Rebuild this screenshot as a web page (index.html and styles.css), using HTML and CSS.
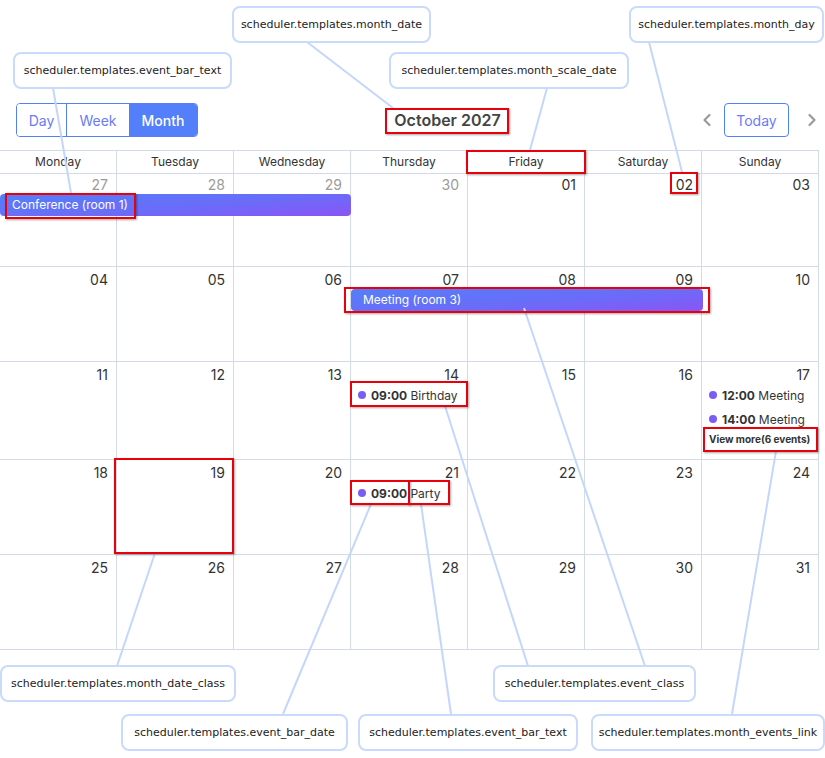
FILE: index.html
```html
<!DOCTYPE html>
<html lang="en">
<head>
<meta charset="utf-8">
<title>Scheduler month templates</title>
<link rel="stylesheet" href="styles.css">
</head>
<body>
<div class="page">
  <div class="scheduler">
    <div class="toolbar">
      <div class="tabs">
        <button class="tab tab-day">Day</button>
        <button class="tab tab-week">Week</button>
        <button class="tab tab-month active">Month</button>
      </div>
      <div class="title">October 2027</div>
      <div class="nav">
        <span class="arrow prev"><svg width="20" height="20" viewBox="0 0 20 20"><path d="M12.5 5 L7.5 10 L12.5 15" fill="none" stroke="#9a9a9a" stroke-width="2.2" stroke-linecap="round" stroke-linejoin="round"/></svg></span>
        <button class="today">Today</button>
        <span class="arrow next"><svg width="20" height="20" viewBox="0 0 20 20"><path d="M7.5 5 L12.5 10 L7.5 15" fill="none" stroke="#9a9a9a" stroke-width="2.2" stroke-linecap="round" stroke-linejoin="round"/></svg></span>
      </div>
    </div>

    <div class="month">
      <div class="scale">
        <div class="scale-cell">Monday</div>
        <div class="scale-cell">Tuesday</div>
        <div class="scale-cell">Wednesday</div>
        <div class="scale-cell">Thursday</div>
        <div class="scale-cell">Friday</div>
        <div class="scale-cell">Saturday</div>
        <div class="scale-cell">Sunday</div>
      </div>

      <div class="week first">
        <div class="cell c1 past">27</div>
        <div class="cell c2 past">28</div>
        <div class="cell c3 past">29</div>
        <div class="cell c4 past">30</div>
        <div class="cell c5">01</div>
        <div class="cell c6">02</div>
        <div class="cell c7">03</div>
        <div class="bar span-1-3 flush-left">Conference (room 1)</div>
      </div>

      <div class="week">
        <div class="cell c1">04</div>
        <div class="cell c2">05</div>
        <div class="cell c3">06</div>
        <div class="cell c4">07</div>
        <div class="cell c5">08</div>
        <div class="cell c6">09</div>
        <div class="cell c7">10</div>
        <div class="bar span-4-6">Meeting (room 3)</div>
      </div>

      <div class="week tall">
        <div class="cell c1">11</div>
        <div class="cell c2">12</div>
        <div class="cell c3">13</div>
        <div class="cell c4">14</div>
        <div class="cell c5">15</div>
        <div class="cell c6">16</div>
        <div class="cell c7">17</div>
        <div class="ev c4 r2"><span class="dot"></span><b>09:00</b>&nbsp;Birthday</div>
        <div class="ev c7 r2"><span class="dot"></span><b>12:00</b>&nbsp;Meeting</div>
        <div class="ev c7 r3"><span class="dot"></span><b>14:00</b>&nbsp;Meeting</div>
        <div class="more c7 r4">View more(6 events)</div>
      </div>

      <div class="week">
        <div class="cell c1">18</div>
        <div class="cell c2">19</div>
        <div class="cell c3">20</div>
        <div class="cell c4">21</div>
        <div class="cell c5">22</div>
        <div class="cell c6">23</div>
        <div class="cell c7">24</div>
        <div class="ev c4 r2"><span class="dot"></span><b>09:00</b>&nbsp;Party</div>
      </div>

      <div class="week">
        <div class="cell c1">25</div>
        <div class="cell c2">26</div>
        <div class="cell c3">27</div>
        <div class="cell c4">28</div>
        <div class="cell c5">29</div>
        <div class="cell c6">30</div>
        <div class="cell c7">31</div>
      </div>
    </div>
  </div>

  <svg class="connectors" width="825" height="758" viewBox="0 0 825 758">
    <g stroke="#c4d7fb" stroke-width="2" fill="none">
      <line x1="307" y1="42" x2="393" y2="108"/>
      <line x1="53" y1="88" x2="71" y2="193"/>
      <line x1="547" y1="88" x2="530" y2="150"/>
      <line x1="649" y1="42" x2="682" y2="172"/>
      <line x1="155" y1="553" x2="117" y2="666"/>
      <line x1="371" y1="504" x2="283" y2="714"/>
      <line x1="421" y1="504" x2="451" y2="714"/>
      <line x1="445" y1="406" x2="528" y2="666"/>
      <line x1="524" y1="308" x2="645" y2="666"/>
      <line x1="776" y1="451" x2="732" y2="714"/>
    </g>
  </svg>

  <div class="mark mk-conf"></div>
  <div class="mark mk-title"></div>
  <div class="mark mk-friday"></div>
  <div class="mark mk-day02"></div>
  <div class="mark mk-meeting"></div>
  <div class="mark mk-birthday"></div>
  <div class="mark mk-more"></div>
  <div class="mark mk-cell19"></div>
  <div class="mark mk-time"></div>
  <div class="mark mk-party"></div>

  <div class="callout co-month-date">scheduler.templates.month_date</div>
  <div class="callout co-month-day">scheduler.templates.month_day</div>
  <div class="callout co-bar-text-top">scheduler.templates.event_bar_text</div>
  <div class="callout co-scale-date">scheduler.templates.month_scale_date</div>
  <div class="callout co-date-class">scheduler.templates.month_date_class</div>
  <div class="callout co-event-class">scheduler.templates.event_class</div>
  <div class="callout co-bar-date">scheduler.templates.event_bar_date</div>
  <div class="callout co-bar-text-bottom">scheduler.templates.event_bar_text</div>
  <div class="callout co-events-link">scheduler.templates.month_events_link</div>
</div>
</body>
</html>
```

FILE: styles.css
```css
* { box-sizing: border-box; }

html, body {
  margin: 0;
  padding: 0;
  background: #ffffff;
}

body {
  font-family: Inter, "Noto Sans", sans-serif;
  color: #333333;
  width: 825px;
  height: 758px;
  overflow: hidden;
}

.page {
  position: relative;
  width: 825px;
  height: 758px;
}

.scheduler {
  padding-top: 103px;
}

/* ---------- toolbar ---------- */
.toolbar {
  display: flex;
  align-items: center;
  justify-content: space-between;
  height: 34px;
  padding: 0 3px 0 16px;
}

.tabs {
  display: flex;
  height: 34px;
  border: 1px solid #537ffa;
  border-radius: 4px;
  overflow: hidden;
}

.tab {
  font-family: Inter, "Noto Sans", sans-serif;
  font-size: 14px;
  color: #6a7cf6;
  background: #ffffff;
  border: 0;
  margin: 0;
  padding: 0;
  height: 32px;
  cursor: pointer;
}

.tab-day { width: 50px; border-right: 1px solid #537ffa; }
.tab-week { width: 62px; }
.tab-month { width: 68px; }

.tab.active {
  background: #537ffa;
  color: #ffffff;
  font-weight: 500;
}

.title {
  font-size: 16px;
  font-weight: 600;
  color: #444444;
}

.nav {
  display: flex;
  align-items: center;
  height: 34px;
}

.arrow {
  display: flex;
  width: 20px;
  height: 20px;
}

.prev { margin-right: 7px; }
.next { margin-left: 13px; }

.today {
  font-family: Inter, "Noto Sans", sans-serif;
  font-size: 14px;
  color: #6a7cf6;
  background: #ffffff;
  width: 65px;
  height: 34px;
  border: 1px solid #537ffa;
  border-radius: 4px;
  padding: 0;
}

/* ---------- month grid ---------- */
.month {
  margin-top: 13px;
  width: 819px;
  border-top: 1px solid #d3dbe6;
}

.scale {
  display: grid;
  grid-template-columns: repeat(7, 117px);
  height: 23px;
  border-bottom: 1px solid #d3dbe6;
}

.scale-cell {
  font-size: 12px;
  line-height: 22px;
  text-align: center;
  color: #333333;
  border-right: 1px solid #d3dbe6;
}

.week {
  display: grid;
  grid-template-columns: repeat(7, 117px);
  grid-template-rows: 21px 24px 24px 1fr;
  height: 95px;
  border-bottom: 1px solid #d3dbe6;
}

.week.first {
  height: 93px;
  grid-template-rows: 19px 24px 24px 1fr;
}

.week.tall {
  height: 98px;
}

.cell {
  grid-row: 1 / -1;
  border-right: 1px solid #d3dbe6;
  text-align: right;
  font-size: 14px;
  line-height: 17px;
  padding: 4px 8px 0 0;
  color: #333333;
}

.week.first .cell { padding-top: 2px; }

.cell.past { color: #9b9b9b; }

.c1 { grid-column: 1; }
.c2 { grid-column: 2; }
.c3 { grid-column: 3; }
.c4 { grid-column: 4; }
.c5 { grid-column: 5; }
.c6 { grid-column: 6; }
.c7 { grid-column: 7; }

.r2 { grid-row: 2; }
.r3 { grid-row: 3; }
.r4 { grid-row: 4; }

.bar {
  grid-row: 2;
  align-self: start;
  margin-top: 1px;
  height: 22px;
  line-height: 22px;
  font-size: 12px;
  color: #ffffff;
  padding-left: 12px;
  border-radius: 4px;
  background: linear-gradient(175deg, #537ffa 0%, #6a6cf8 55%, #8a55f6 100%);
  white-space: nowrap;
  overflow: hidden;
}

.span-1-3 { grid-column: 1 / 4; }
.span-4-6 { grid-column: 4 / 7; margin-right: -1px; }

.ev {
  display: flex;
  align-items: center;
  height: 24px;
  padding-left: 7px;
  font-size: 12px;
  color: #333333;
  white-space: nowrap;
}

.ev b { font-weight: 700; }

.dot {
  width: 8px;
  height: 8px;
  border-radius: 50%;
  background: #7a5df6;
  margin-right: 5px;
  flex: none;
}

.more {
  align-self: start;
  height: 16px;
  line-height: 16px;
  padding-left: 7px;
  font-size: 10px;
  font-weight: 700;
  color: #333333;
  white-space: nowrap;
}

/* ---------- annotation overlay ---------- */
.connectors {
  position: absolute;
  left: 0;
  top: 0;
  pointer-events: none;
}

.mark {
  position: absolute;
  border: 2px solid #e8000b;
  box-shadow: 1px 1px 2px rgba(0, 0, 0, 0.35);
}

.mk-conf { left: 5px; top: 193px; width: 131px; height: 26px; }
.mk-title { left: 385px; top: 108px; width: 124px; height: 26px; }
.mk-friday { left: 466px; top: 150px; width: 120px; height: 24px; }
.mk-day02 { left: 670px; top: 172px; width: 28px; height: 22px; }
.mk-meeting { left: 344px; top: 287px; width: 366px; height: 26px; }
.mk-birthday { left: 350px; top: 381px; width: 118px; height: 26px; }
.mk-more { left: 703px; top: 427px; width: 115px; height: 25px; }
.mk-cell19 { left: 114px; top: 458px; width: 120px; height: 96px; }
.mk-time { left: 350px; top: 480px; width: 60px; height: 25px; }
.mk-party { left: 408px; top: 480px; width: 42px; height: 25px; }

.callout {
  position: absolute;
  display: flex;
  align-items: center;
  justify-content: center;
  height: 37px;
  background: #ffffff;
  border: 2px solid #c9dafc;
  border-radius: 8px;
  font-family: "DejaVu Sans", Verdana, sans-serif;
  font-size: 11px;
  color: #222222;
  white-space: nowrap;
}

.co-month-date { left: 232px; top: 6px; width: 199px; }
.co-month-day { left: 629px; top: 6px; width: 195px; }
.co-bar-text-top { left: 13px; top: 52px; width: 219px; }
.co-scale-date { left: 389px; top: 52px; width: 240px; }
.co-date-class { left: 0; top: 665px; width: 236px; }
.co-event-class { left: 493px; top: 665px; width: 203px; }
.co-bar-date { left: 121px; top: 714px; width: 227px; }
.co-bar-text-bottom { left: 358px; top: 714px; width: 220px; }
.co-events-link { left: 591px; top: 714px; width: 234px; }
```
